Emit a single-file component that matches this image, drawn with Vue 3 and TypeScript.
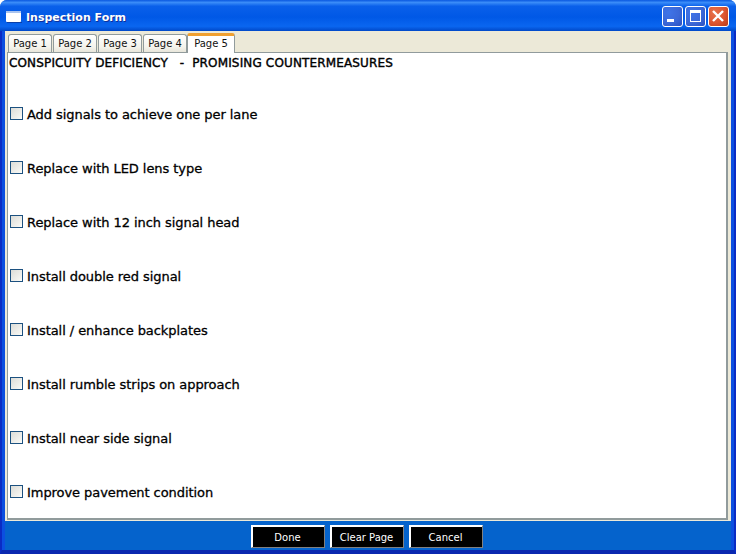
<script setup lang="ts">
const tabs = ['Page 1', 'Page 2', 'Page 3', 'Page 4', 'Page 5']
const items = [
  'Add signals to achieve one per lane',
  'Replace with LED lens type',
  'Replace with 12 inch signal head',
  'Install double red signal',
  'Install / enhance backplates',
  'Install rumble strips on approach',
  'Install near side signal',
  'Improve pavement condition',
]
const actions = ['Done', 'Clear Page', 'Cancel']
</script>

<template>
  <div class="window">
    <header class="titlebar">
      <svg class="appicon" width="16" height="12" viewBox="0 0 16 12">
        <rect x="0" y="0" width="15" height="11" rx="1" fill="#fff" />
        <rect x="0" y="0" width="15" height="2" fill="#a9c3ee" />
        <rect x="1" y="11" width="15" height="1" fill="#0a3fa8" />
      </svg>
      <span class="title">Inspection Form</span>
      <div class="controls">
        <div class="ctl blue">
          <svg width="21" height="21" viewBox="0 0 21 21"><rect x="5" y="13" width="7" height="3" fill="#fff" /></svg>
        </div>
        <div class="ctl blue">
          <svg width="21" height="21" viewBox="0 0 21 21"><rect x="5.5" y="4.5" width="10" height="11" fill="none" stroke="#fff" /><rect x="5" y="4" width="11" height="3" fill="#fff" /></svg>
        </div>
        <div class="ctl red">
          <svg width="21" height="21" viewBox="0 0 21 21"><path d="M5 5 L15 15 M15 5 L5 15" stroke="#fff" stroke-width="2.4" /></svg>
        </div>
      </div>
    </header>
    <div class="frame">
      <div class="client">
        <div class="sheet">
          <div class="tabs">
            <div v-for="(t, i) in tabs" :key="t" class="tab" :class="{ active: i === 4 }">{{ t }}</div>
          </div>
          <main class="panel">
            <div class="heading">CONSPICUITY DEFICIENCY&nbsp;&nbsp; -&nbsp; PROMISING COUNTERMEASURES</div>
            <label v-for="item in items" :key="item" class="row">
              <span class="box"></span>
              <span class="label">{{ item }}</span>
            </label>
          </main>
        </div>
        <footer class="actions">
          <button v-for="a in actions" :key="a" class="btn" type="button">{{ a }}</button>
        </footer>
      </div>
    </div>
  </div>
</template>

<style>
html, body { margin: 0; padding: 0; }
</style>

<style scoped>
.window {
  width: 736px;
  height: 554px;
  display: flex;
  flex-direction: column;
  overflow: hidden;
  background: #0a5fd0;
  border-radius: 7px 7px 0 0;
  font-family: "DejaVu Sans", Verdana, sans-serif;
}
.titlebar {
  height: 31px;
  flex: none;
  display: flex;
  align-items: center;
  padding: 3px 7px 0 6px;
  box-sizing: border-box;
  background: linear-gradient(180deg, #0a58e0 0%, #3a8cf8 8%, #0a60ea 20%, #0058e6 55%, #0a66f0 85%, #0048c8 100%);
}
.appicon { flex: none; margin-right: 4px; margin-top: -1px; }
.title {
  color: #fff;
  font-size: 11px;
  font-weight: 700;
  text-shadow: 1px 1px 0 #0f2f9a;
  flex: 1;
}
.controls { display: flex; gap: 2px; margin-top: -1px; }
.ctl {
  width: 21px;
  height: 21px;
  box-sizing: border-box;
  border: 1px solid #fff;
  border-radius: 3px;
  display: flex;
  align-items: center;
  justify-content: center;
}
.ctl svg { flex: none; margin: -1px; }
.blue { background: radial-gradient(circle at 30% 30%, #3f74e8 0%, #3b68d8 55%, #2a50c0 100%); }
.red { background: radial-gradient(circle at 30% 30%, #e8734c 0%, #dc5530 55%, #b83a18 100%); }
.frame {
  flex: 1;
  min-height: 0;
  display: flex;
  border: 2px solid #0a2cc4;
  border-top: none;
  border-bottom-width: 4px;
  border-bottom-color: #0a28b0;
}
.client {
  flex: 1;
  min-width: 0;
  display: flex;
  flex-direction: column;
  border-left: 3px solid #0c4fe0;
  border-right: 3px solid #0c4fe0;
  background: #0563cc;
}
.sheet {
  height: 490px;
  flex: none;
  box-sizing: border-box;
  background: #ece9d8;
  padding: 2px 3px 1px 2px;
  display: flex;
  flex-direction: column;
}
.tabs {
  display: flex;
  align-items: flex-end;
  height: 19px;
  flex: none;
  padding-left: 1px;
  gap: 1px;
}
.tab {
  height: 18px;
  box-sizing: border-box;
  width: 44px;
  text-align: center;
  font-size: 10px;
  line-height: 18px;
  color: #111;
  border: 1px solid #919b9c;
  border-bottom: none;
  border-radius: 3px 3px 0 0;
  background: linear-gradient(180deg, #fff 0%, #f4f3ec 70%, #e8e6da 100%);
}
.tab.active {
  width: 48px;
  height: 20px;
  margin-left: -1px;
  margin-bottom: -1px;
  line-height: 15px;
  background: #fff;
  border-top: 3px solid #f0a030;
  position: relative;
  z-index: 1;
}
.panel {
  flex: 1;
  min-height: 0;
  box-sizing: border-box;
  background: #fff;
  border: 1px solid #919b9c;
  border-right-width: 2px;
  border-bottom-width: 2px;
  padding: 3px 0 0 1px;
}
.heading {
  font-size: 12px;
  font-weight: 400;
  line-height: 14px;
  height: 14px;
  color: #000;
  white-space: pre;
  letter-spacing: 0.15px;
  -webkit-text-stroke: 0.4px #000;
}
.row {
  display: flex;
  align-items: center;
  height: 14px;
  margin-top: 40px;
  padding-left: 1px;
}
.row:first-of-type { margin-top: 37px; }
.box {
  width: 13px;
  height: 13px;
  flex: none;
  box-sizing: border-box;
  border: 1px solid #1c5180;
  background: linear-gradient(135deg, #dcdcd7 0%, #f4f4f0 80%, #fff 100%);
  margin-right: 4px;
  margin-top: -2px;
}
.label {
  font-size: 13px;
  font-weight: 400;
  color: #000;
  white-space: nowrap;
  letter-spacing: -0.06px;
  -webkit-text-stroke: 0.3px #000;
}
.actions {
  flex: 1;
  display: flex;
  justify-content: center;
  align-items: flex-start;
  gap: 5px;
  padding-top: 4px;
  padding-right: 3px;
  box-sizing: border-box;
}
.btn {
  width: 74px;
  height: 23px;
  box-sizing: border-box;
  background: #000;
  color: #fff;
  font-family: inherit;
  font-size: 10px;
  padding: 1px 0 0;
  border: 1px solid;
  border-color: #fff #808080 #808080 #fff;
  box-shadow: inset 1px 1px 0 #fff;
}
</style>
